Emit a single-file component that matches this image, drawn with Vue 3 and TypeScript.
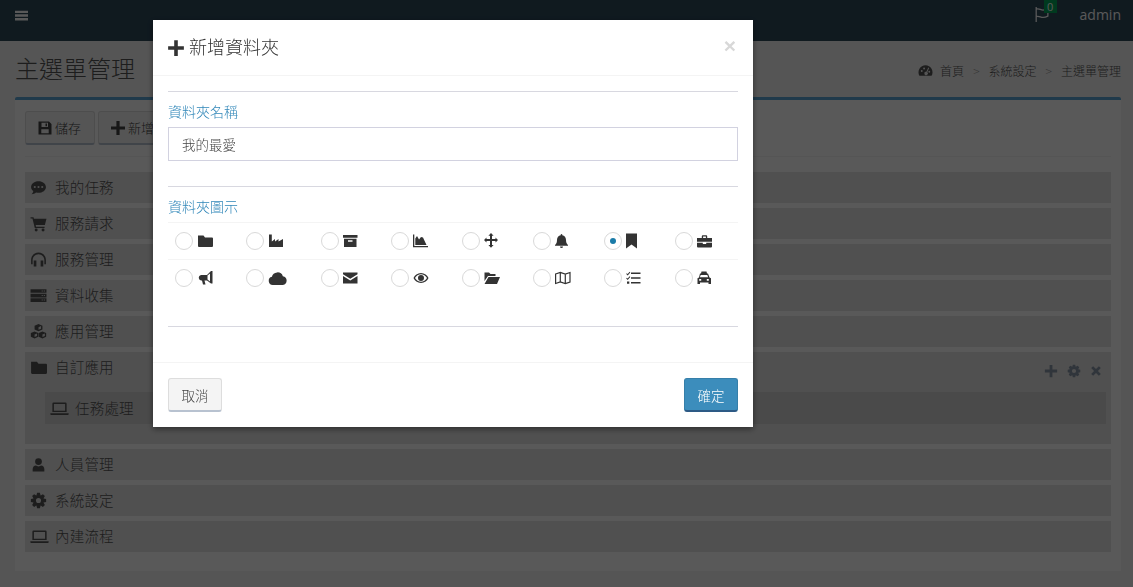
<template>
  <div class="page">
    <header class="topbar">
      <Icon name="bars" class="menu-btn" />
      <div class="top-right">
        <span class="flag">
          <Icon name="flag" :size="17" />
          <b class="badge">0</b>
        </span>
        <span class="user">admin</span>
      </div>
    </header>

    <main class="content">
      <div class="title-row">
        <h1>主選單管理</h1>
        <ol class="crumbs">
          <li><Icon name="tachometer" :size="15" />首頁</li>
          <li class="sep">&gt;</li>
          <li>系統設定</li>
          <li class="sep">&gt;</li>
          <li>主選單管理</li>
        </ol>
      </div>

      <section class="panel">
        <div class="toolbar">
          <button class="btn"><Icon name="save" :size="16" />儲存</button>
          <button class="btn"><Icon name="plus" :size="16" />新增資料夾</button>
        </div>
        <ul class="menu">
          <li v-for="item in menu" :key="item.label" class="menu-row">
            <div class="menu-head">
              <Icon :name="item.icon" :size="item.icon === 'laptop' ? 19 : 17" />
              <span>{{ item.label }}</span>
              <div v-if="item.children" class="row-tools">
                <Icon name="plus" :size="14" />
                <Icon name="cog" :size="14" />
                <Icon name="times" :size="14" />
              </div>
            </div>
            <div v-if="item.children" class="sub-list">
              <div v-for="sub in item.children" :key="sub" class="sub-row">
                <Icon name="laptop" :size="19" />
                <span>{{ sub }}</span>
              </div>
            </div>
          </li>
        </ul>
      </section>
    </main>

    <div class="backdrop"></div>

    <div class="modal">
      <div class="modal-head">
        <h4><Icon name="plus" :size="18" /><span>新增資料夾</span></h4>
        <span class="close">×</span>
      </div>
      <div class="modal-body">
        <hr />
        <label class="field-label">資料夾名稱</label>
        <input class="field" type="text" value="我的最愛" readonly />
        <hr class="second" />
        <label class="field-label">資料夾圖示</label>
        <div class="icon-grid">
          <div v-for="name in iconChoices" :key="name" class="choice">
            <span class="radio" :class="{ on: name === selected }"></span>
            <Icon :name="name" :size="name === 'cloud' ? 19 : 16" />
          </div>
        </div>
        <hr class="third" />
      </div>
      <div class="modal-foot">
        <button class="btn cancel">取消</button>
        <button class="btn ok">確定</button>
      </div>
    </div>
  </div>
</template>

<script setup lang="ts">
import { h, ref } from "vue";

type MenuItem = {
  label: string;
  icon: string;
  children?: string[];
};

function gearPath() {
  const pts: string[] = [];
  for (let i = 0; i < 8; i++) {
    const a = (i * Math.PI) / 4 - Math.PI / 2;
    const at = (r: number, d: number) =>
      `${(8 + r * Math.cos(a + d)).toFixed(2)} ${(8 + r * Math.sin(a + d)).toFixed(2)}`;
    pts.push(at(5.2, -0.38), at(7.3, -0.18), at(7.3, 0.18), at(5.2, 0.38));
  }
  return `M${pts.join("L")}zM8 5.6a2.4 2.4 0 1 0 0 4.8 2.4 2.4 0 0 0 0-4.8z`;
}

const paths: Record<string, string> = {
  bars: "M0 2h16v2.800H0zM0 6.600h16v2.800H0zM0 11.200h16V14H0z",
  plus: "M6.400 1h3.200v5.400H15v3.200H9.600V15H6.400V9.600H1V6.400h5.400z",
  times: "M2.500 4.700l2.200-2.200L8 5.800l3.300-3.300 2.200 2.200L10.200 8l3.300 3.300-2.200 2.200L8 10.200l-3.300 3.300-2.200-2.200L5.800 8z",
  save: "M1.500 1.500h10.500l2.500 2.500v10.500H1.500zM4.500 2.800v4.200h6.500V2.800zM8.500 3.500h1.500v2.700H8.500zM4.300 9.200v4h7.400v-4z",
  comment:
    "M8 2c3.900 0 7 2.400 7 5.500S11.900 13 8 13c-.8 0-1.600-.1-2.300-.3-1.100 1-2.700 1.600-4.200 1.600.9-.9 1.500-2 1.600-3C1.800 10.300 1 9 1 7.500 1 4.400 4.100 2 8 2zM4.500 6.500a1 1 0 1 0 0 2 1 1 0 0 0 0-2zM8 6.500a1 1 0 1 0 0 2 1 1 0 0 0 0-2zM11.500 6.500a1 1 0 1 0 0 2 1 1 0 0 0 0-2z",
  cart: "M.5 2h2.800l.4 1.500H15.500l-1.500 6H5.400l.3 1.500h8v1.300H4.500L2.300 3.300H.5zM5.800 12.700a1.400 1.400 0 1 1 0 2.800 1.400 1.400 0 0 1 0-2.800zM12.300 12.700a1.400 1.400 0 1 1 0 2.800 1.400 1.400 0 0 1 0-2.800z",
  headphones:
    "M8 1.500C4 1.500 1 4.500 1 8.500v4h1.500v-4C2.500 5.400 5 3 8 3s5.500 2.400 5.500 5.500v4H15v-4c0-4-3-7-7-7zM3.500 9H6v5.500H3.500zM10 9h2.500v5.500H10z",
  server:
    "M.5 2h15v3.500H.5zM.5 6.300h15v3.500H.5zM.5 10.500h15V14H.5zM11 3.200v1h1v-1zM13 3.200v1h1v-1zM11 7.500v1h1v-1zM13 7.500v1h1v-1zM11 11.700v1h1v-1zM13 11.700v1h1v-1z",
  cubes:
    "M8 1l3.700 1.500v3.700L8 7.700 4.300 6.200V2.500zM4.300 8l3.500 1.500V13l-3.500 1.500L.8 13V9.500zM11.700 8l3.500 1.500V13l-3.500 1.500L8.200 13V9.500zM8 3.900v2.500l2.400-1V2.900zM4.300 10.800v2.300l2.300-.9V9.800zM11.700 10.800v2.300l2.300-.9V9.800z",
  folder: "M1 2.500h5.500l1.500 2h7a1 1 0 0 1 1 1V13a1 1 0 0 1-1 1H2a1 1 0 0 1-1-1z",
  user: "M8 2a3.200 3.200 0 1 1 0 6.400A3.200 3.200 0 0 1 8 2zM2.500 14.500v-2c0-2 1.300-3.500 3-3.500.7.500 1.500.8 2.500.8s1.800-.3 2.500-.8c1.700 0 3 1.500 3 3.500v2z",
  cog: gearPath(),
  laptop:
    "M3 3h10a1 1 0 0 1 1 1v7H2V4a1 1 0 0 1 1-1zM3.300 4.300v5.500h9.400V4.300zM.3 12h15.400v.8a.7.7 0 0 1-.7.7H1a.7.7 0 0 1-.7-.7z",
  tachometer:
    "M8 2.500a7.500 7.500 0 0 0-6.500 11.200h13A7.500 7.500 0 0 0 8 2.500zM4 7.500a1 1 0 1 0 0 2 1 1 0 0 0 0-2zM6.500 4.800a1 1 0 1 0 0 2 1 1 0 0 0 0-2zM11 4.900L8.900 9.400a1.800 1.800 0 1 0 1 .5l2-4.500zM12 8.300a1 1 0 1 0 0 2 1 1 0 0 0 0-2z",
  flag: "M3 1v14M3 3c2.500-1.200 4 .8 6.500.8 1.500 0 3-.6 4.500-1.300v7c-1.500.8-3 1.300-4.500 1.300-2.500 0-4-2-6.500-.8",
  industry: "M1 1.500h2.800v7L7 6v2.500L10.500 6v2.500L15 6v8H1z",
  archive: "M0 2h14.500v2.800H0zM1 5.800h12.500V14H1zM5 7.300v1.500h4.500V7.300z",
  area: "M0 1.500h1.300V13H15v1.300H0zM2.300 12V5.500L4 3l2 3.500L8 4l2 .5 3.500 7.500z",
  arrows:
    "M7 0l2.600 2.800H8V6.100h3.500V4.500L14 7l-2.500 2.500V7.900H8V12h1.600L7 14.800 4.400 12H6V7.900H2.500v1.600L0 7l2.500-2.500v1.600H6V2.800H4.400z",
  bell: "M6.500 1c.5 0 .8.3.8.8v.5c2.200.4 3.700 2.200 3.700 4.700 0 3 1 4 2 5v.7H0V12c1-1 2-2 2-5 0-2.500 1.500-4.300 3.700-4.700v-.5C5.700 1.300 6 1 6.500 1zM5 13.500h3a1.500 1.500 0 0 1-3 0z",
  bookmark: "M0 .5h11v15L5.500 11.500 0 15.500z",
  briefcase:
    "M0 5h15v3.800H0zM0 9.800h5.800V11h3.400V9.800H15v3.700a1 1 0 0 1-1 1H1a1 1 0 0 1-1-1zM4.800 5V3.200c0-.5.4-.9.900-.9h3.600c.5 0 .9.4.9.9V5H8.900V3.500H6.100V5z",
  bullhorn:
    "M14 1h1.500v12.500H14L10 10.500H7.500l1 4H6l-1-4H4a2.800 2.800 0 0 1 0-5.500h6zM13 3.500L10.500 5.500v4l2.500 2z",
  cloud: "M4 13.500a3.500 3.500 0 0 1-.7-6.900A4.800 4.800 0 0 1 12.500 6a3.800 3.800 0 0 1 0 7.500z",
  envelope: "M0 2.500h14.500v1.700L7.250 8.800 0 4.200zM0 6l7.250 4.600L14.500 6v7.500H0z",
  eye: "M8 3c3.500 0 6.300 2.200 7.500 5-1.200 2.800-4 5-7.500 5S1.700 10.800.5 8C1.700 5.200 4.500 3 8 3zM8 4.300C5.500 4.300 3.300 5.800 2 8c1.300 2.200 3.500 3.700 6 3.700s4.700-1.500 6-3.700c-1.300-2.200-3.500-3.700-6-3.700zM8 5a3 3 0 1 1 0 6 3 3 0 0 1 0-6z",
  "folder-open": "M.5 2.500H5L6.500 4h5v2H4L.5 11zM4.500 7H16l-3 7H.5z",
  map: "M.6 4l4.700-1.500 5 1.500 4.700-1.500V12l-4.700 1.500-5-1.500L.6 13.500zM5.300 2.500V12M10.300 4v9.500",
  tasks:
    "M5 2.500h9.500V4H5zM5 7.200h9.500v1.500H5zM5 12h9.500v1.500H5zM.8 3.200l.9.900L3.600 1.800l.7.600-2.600 3-1.500-1.500zM.8 7.700l.9.900 1.900-2.300.7.600-2.600 3-1.500-1.500zM1 11.500h2.300v2.300H1z",
  taxi: "M4.500 1.500h5l.5 2H4zM3 3.500h8l1.500 4 1.500.8V14h-2.500v-1.500H3V14H.5V8.300l1.500-.8zM3.700 5L2.900 7.300h8.200L10.300 5zM2.200 9v1.800h2V9zM9.800 9v1.800h2V9z",
};

const outlined = new Set(["flag", "map"]);

// fa-style icon, drawn on a 16x16 grid
const Icon = (props: { name: string; size?: number }) =>
  h(
    "svg",
    {
      class: "icon",
      viewBox: "0 0 16 16",
      width: props.size ?? 15,
      height: props.size ?? 15,
    },
    h("path", {
      d: paths[props.name],
      "fill-rule": "evenodd",
      fill: outlined.has(props.name) ? "none" : "currentColor",
      stroke: outlined.has(props.name) ? "currentColor" : "none",
      "stroke-width": outlined.has(props.name) ? 1.2 : 0,
    })
  );
Icon.props = ["name", "size"];

const menu: MenuItem[] = [
  { label: "我的任務", icon: "comment" },
  { label: "服務請求", icon: "cart" },
  { label: "服務管理", icon: "headphones" },
  { label: "資料收集", icon: "server" },
  { label: "應用管理", icon: "cubes" },
  { label: "自訂應用", icon: "folder", children: ["任務處理"] },
  { label: "人員管理", icon: "user" },
  { label: "系統設定", icon: "cog" },
  { label: "內建流程", icon: "laptop" },
];

const iconChoices = [
  "folder",
  "industry",
  "archive",
  "area",
  "arrows",
  "bell",
  "bookmark",
  "briefcase",
  "bullhorn",
  "cloud",
  "envelope",
  "eye",
  "folder-open",
  "map",
  "tasks",
  "taxi",
];
const selected = ref("bookmark");
</script>

<style>
html,
body {
  margin: 0;
  height: 100%;
  overflow: hidden;
  background: #f3f3f3;
}
</style>

<style scoped>
.page {
  height: 587px;
  overflow: hidden;
  font-family: "Noto Sans CJK TC", "Open Sans", sans-serif;
  font-size: 14px;
  font-weight: 300;
  color: #555;
}
.icon {
  display: block;
  flex: none;
}

.topbar {
  height: 41px;
  background: #2e4a5b;
  display: flex;
  justify-content: space-between;
  color: #fff;
  padding: 0 12px 0 15px;
}
.menu-btn {
  width: 13px;
  height: 15px;
  margin-top: 8px;
}
.top-right {
  display: flex;
}
.flag {
  position: relative;
  margin-top: 6px;
  margin-right: 30px;
  width: 17px;
  height: 17px;
}
.badge {
  position: absolute;
  left: 11px;
  top: -6px;
  width: 13px;
  height: 13px;
  background: #00a65a;
  font: 400 11px/13px "Open Sans", sans-serif;
  text-align: center;
}
.user {
  font: 14px/30px "Open Sans", sans-serif;
}

.content {
  padding: 0 12px 0 15px;
}
.title-row {
  height: 56px;
  display: flex;
  align-items: center;
  justify-content: space-between;
}
.title-row h1 {
  margin: 0 0 3px;
  font-size: 24px;
  font-weight: 300;
  line-height: 32px;
}
.crumbs {
  list-style: none;
  display: flex;
  align-items: center;
  gap: 9px;
  margin: 2px 0 0;
  padding: 0;
  font-size: 12px;
}
.crumbs li {
  display: flex;
  align-items: center;
  gap: 7px;
}
.crumbs .sep {
  color: #999;
}

.panel {
  background: #fff;
  border-top: 3px solid #5ca6d6;
  border-radius: 2px 2px 0 0;
  padding: 10px 10px 20px;
  height: 474px;
  box-sizing: border-box;
}
.toolbar {
  display: flex;
  gap: 3px;
  padding-bottom: 11px;
  border-bottom: 1px solid #f4f4f4;
  margin-top: 1px;
}
.btn {
  display: flex;
  align-items: center;
  justify-content: center;
  gap: 2px;
  height: 34px;
  padding: 0 13px 0 11px;
  box-sizing: border-box;
  background: #f4f4f4;
  border: 1px solid #ddd;
  border-bottom: 2px solid #b8c2d0;
  border-radius: 3px;
  font: inherit;
  font-size: 13px;
  color: #444;
}
.menu {
  list-style: none;
  margin: 15px 0 0;
  padding: 0;
  display: flex;
  flex-direction: column;
  gap: 5px;
}
.menu-row {
  background: #e4e4e4;
}
.menu-head {
  position: relative;
  height: 31px;
  display: grid;
  grid-template-columns: 25px 1fr;
  align-items: center;
  padding-left: 5px;
  font-size: 14.5px;
}
.menu-head span {
  letter-spacing: 0.2px;
  padding-bottom: 2px;
}
.row-tools {
  position: absolute;
  right: 8px;
  top: 12px;
  display: flex;
  gap: 8.5px;
  color: #8a97a8;
}
.sub-list {
  padding: 9px 5px 20px 20px;
}
.sub-row {
  height: 32px;
  background: #d3d3d3;
  display: grid;
  grid-template-columns: 25px 1fr;
  align-items: center;
  padding-left: 5px;
  font-size: 14.5px;
}
.sub-row span {
  letter-spacing: 0.2px;
  padding-bottom: 2px;
}

.backdrop {
  position: fixed;
  inset: 0;
  background: rgba(0, 0, 0, 0.65);
}

.modal {
  position: fixed;
  left: 153px;
  top: 20px;
  width: 600px;
  background: #fff;
  box-shadow: 0 2px 6px rgba(0, 0, 0, 0.45);
}
.modal-head {
  height: 55px;
  border-bottom: 1px solid #f4f4f4;
  display: flex;
  align-items: center;
  justify-content: space-between;
  padding: 0 17px 0 14px;
}
.modal-head h4 {
  display: flex;
  align-items: center;
  gap: 4px;
  margin: 0;
  font-size: 18px;
  font-weight: 300;
  color: #333;
}
.modal-head h4 span {
  padding-bottom: 3px;
}
.close {
  font: 700 21px/1 "Liberation Sans", sans-serif;
  color: #d8d8d8;
  margin-bottom: 4px;
}
.modal-body {
  padding: 15px 15px 0;
  height: 286px;
  box-sizing: border-box;
}
.modal-body hr {
  margin: 0 0 10px;
  border: 0;
  border-top: 1px solid #d8d8e0;
}
.modal-body .second {
  margin-top: 25px;
}
.modal-body .third {
  margin-top: 30px;
}
.field-label {
  display: block;
  height: 20px;
  line-height: 18px;
  margin-bottom: 5px;
  font-size: 14px;
  color: #2f86b8;
}
.field {
  display: block;
  width: 100%;
  height: 34px;
  box-sizing: border-box;
  padding: 0 13px;
  border: 1px solid #d2d2e0;
  font: inherit;
  font-size: 13.5px;
  color: #444;
  outline: none;
}
.icon-grid {
  display: grid;
  grid-template-columns: 71px 75px 70px 71px 71px 71px 71px 70px;
  grid-auto-rows: 37px;
}
.choice {
  display: flex;
  align-items: center;
  gap: 4px;
  padding-left: 7px;
  color: #333;
  border-top: 1px solid #f4f4f4;
}
.radio {
  position: relative;
  width: 18px;
  height: 18px;
  box-sizing: border-box;
  flex: none;
  border: 1px solid #d9d9d9;
  border-radius: 50%;
  background: #fff;
}
.radio.on::after {
  content: "";
  position: absolute;
  inset: 5px;
  border-radius: 50%;
  background: #1a7ba8;
}
.modal-foot {
  height: 65px;
  box-sizing: border-box;
  border-top: 1px solid #f4f4f4;
  padding: 15px;
  display: flex;
  justify-content: space-between;
}
.cancel {
  width: 54px;
  padding: 0;
  font-size: 13.5px;
}
.ok {
  width: 54px;
  padding: 0;
  background: #3c8dbc;
  border-color: #367fa9 #367fa9 #2d5a85;
  color: #fff;
  font-size: 13.5px;
}
</style>
